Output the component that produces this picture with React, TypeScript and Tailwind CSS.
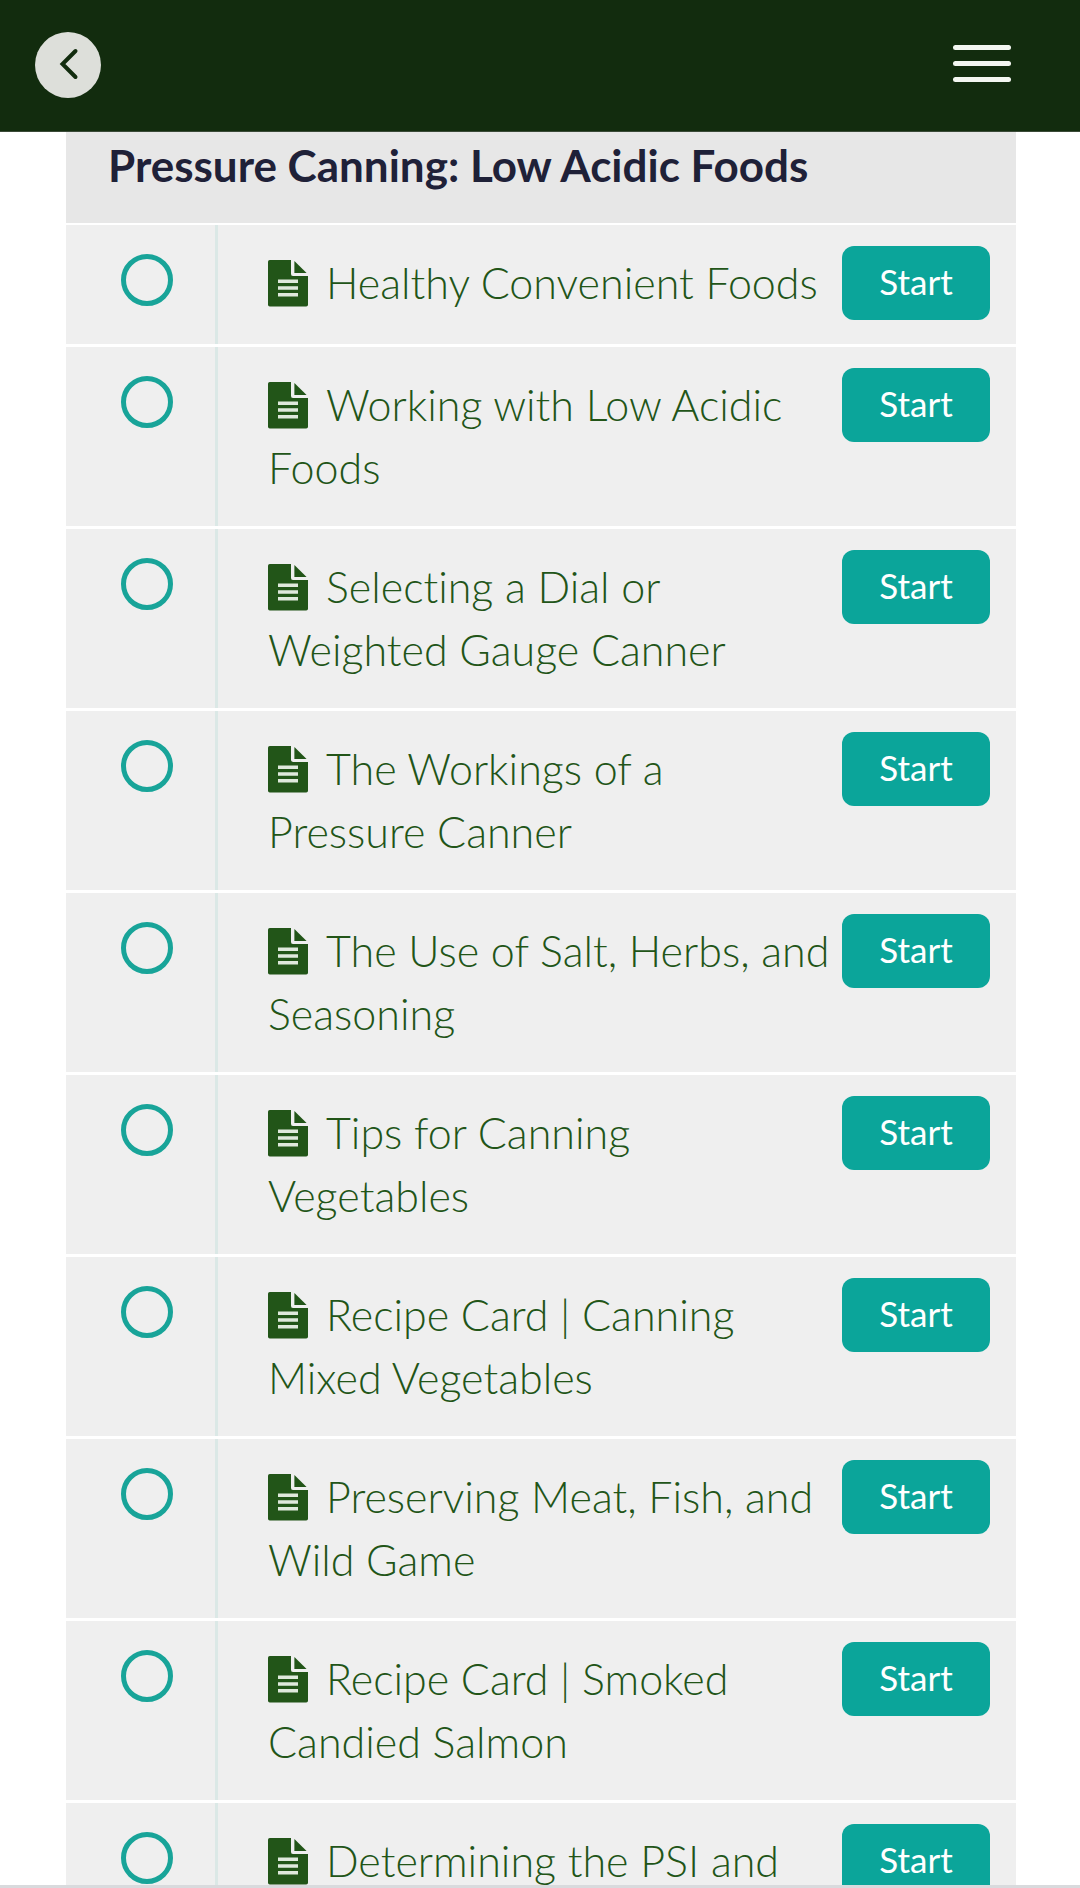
const sectionTitle = "Pressure Canning: Low Acidic Foods"

const lessons = [
  "Healthy Convenient Foods",
  "Working with Low Acidic Foods",
  "Selecting a Dial or Weighted Gauge Canner",
  "The Workings of a Pressure\u00a0Canner",
  "The Use of Salt, Herbs, and Seasoning",
  "Tips for Canning Vegetables",
  "Recipe Card | Canning Mixed Vegetables",
  "Preserving Meat, Fish, and Wild Game",
  "Recipe Card | Smoked Candied Salmon",
  "Determining the PSI and",
]

function DocumentIcon() {
  return (
    <svg className="inline-block w-10 h-12 mr-[18px] -mt-2 align-middle" viewBox="0 0 40 48" aria-hidden="true">
      <path
        d="M1.8 0H23V13.7A2 2 0 0 0 25 15.9H40V44.7A1.8 1.8 0 0 1 38.2 46.5H1.8A1.8 1.8 0 0 1 0 44.7V1.8A1.8 1.8 0 0 1 1.8 0Z"
        fill="#225518"
      />
      <path d="M26.4 0.9L38.6 12.9H26.4Z" fill="#225518" />
      <path d="M10 21.3H30M10 28H30M10 34.7H30" stroke="#dfe9dc" strokeWidth="3.6" />
    </svg>
  )
}

function LessonRow({ title }: { title: string }) {
  return (
    <li className="flex min-h-[119px] bg-[#efefef]">
      {/* Completion status */}
      <div className="w-[152px] shrink-0 border-r-[3px] border-[#dbe8e6] pl-[55px] pt-[29px]">
        <input
          type="checkbox"
          aria-label={title}
          className="block appearance-none size-[52px] rounded-full border-[5px] border-[#18a499] checked:bg-[#18a499]"
        />
      </div>

      <a
        href="#"
        className="flex-1 pl-[50px] pt-[26px] pb-[27px] text-[43px] leading-[63px] font-light text-[#225518] [font-variant-ligatures:no-common-ligatures]"
      >
        <DocumentIcon />
        {title}
      </a>

      <button
        type="button"
        aria-label={`Start ${title}`}
        className="mt-[21px] mr-[26px] ml-2 h-[74px] w-[148px] shrink-0 rounded-xl bg-[#0ba59a] pb-1 text-[35px] leading-[50px] text-white"
      >
        Start
      </button>
    </li>
  )
}

export default function App() {
  return (
    <div className="flex h-screen flex-col overflow-hidden bg-white font-['Lato',sans-serif]">
      <header className="flex h-[132px] shrink-0 items-center justify-between border-b border-[#3a4a38] bg-[#122c0e] pb-[2px] pl-[35px] pr-[69px]">
        <button
          type="button"
          aria-label="Go back"
          className="flex size-[66px] items-center justify-center rounded-full bg-[#dddfda]"
        >
          <svg className="size-[66px]" viewBox="0 0 66 66" fill="none" aria-hidden="true">
            <path d="M40.500 19L27.500 32L40.500 45" stroke="#122c0e" strokeWidth="4" strokeLinecap="round" strokeLinejoin="miter" />
          </svg>
        </button>

        <button type="button" aria-label="Open menu" className="flex w-[58px] flex-col gap-[11px] pb-[2px]">
          <span className="h-[5px] w-full rounded-sm bg-[#f3f6f1]" />
          <span className="h-[5px] w-full rounded-sm bg-[#f3f6f1]" />
          <span className="h-[5px] w-full rounded-sm bg-[#f3f6f1]" />
        </button>
      </header>

      <main className="min-h-0 flex-1 overflow-hidden pl-[66px] pr-16">
        <h2 className="bg-[#e7e7e7] px-[42px] pt-px pb-[26px] text-[44px] leading-[64px] font-bold text-[#1f2138]">
          {sectionTitle}
        </h2>
        <ul className="mt-[2px] flex flex-col gap-[3px]">
          {lessons.map((lesson) => (
            <LessonRow key={lesson} title={lesson} />
          ))}
        </ul>
      </main>

      <div className="h-[3px] shrink-0 bg-[#d9dadd]" />
    </div>
  )
}
